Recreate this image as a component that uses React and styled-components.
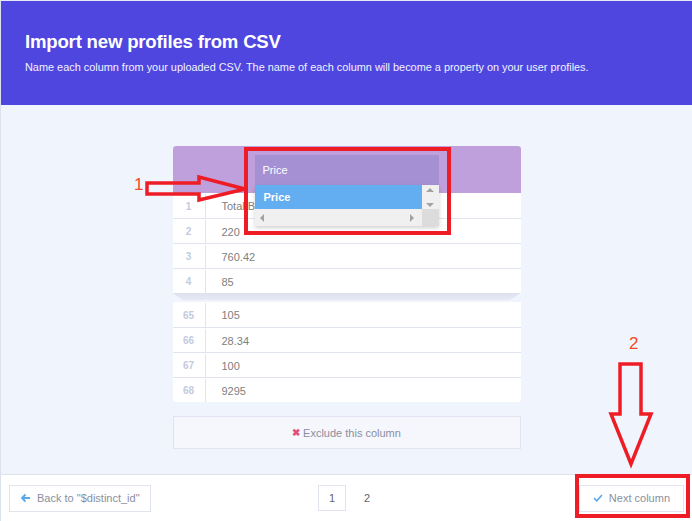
import React from "react";
import styled, { createGlobalStyle } from "styled-components";

const GlobalStyle = createGlobalStyle`
  html, body {
    margin: 0;
    padding: 0;
    background: #f0f4fc;
  }
  body {
    font-family: "Liberation Sans", Arial, sans-serif;
  }
`;

const Page = styled.div`
  position: relative;
  width: 692px;
  height: 521px;
  display: flex;
  flex-direction: column;
  background: #f0f4fc;
  border-left: 1px solid #dbe2ee;
  box-sizing: border-box;
  overflow: hidden;
`;

const Header = styled.header`
  background: #4f46e0;
  height: 105px;
  box-sizing: border-box;
  padding: 30px 24px 0;
  border-top: 1px solid #e6e8f6;
  color: #fff;
`;

const Title = styled.h1`
  margin: 0;
  font-size: 18.6px;
  font-weight: bold;
  letter-spacing: -0.2px;
`;

const Subtitle = styled.p`
  margin: 8px 0 0;
  font-size: 10.9px;
  color: #f2f2ff;
`;

const Main = styled.main`
  flex: 1;
  display: flex;
  flex-direction: column;
  align-items: center;
  padding-top: 41px;
`;

const Column = styled.div`
  width: 348px;
  display: flex;
  flex-direction: column;
`;

const Card = styled.div`
  background: #fff;
  border-radius: ${(p) => p.$radius || "3px"};
  position: relative;
`;

const ColumnHead = styled.div`
  position: relative;
  height: 47px;
  background: #c0a0dc;
  border-radius: 3px 3px 0 0;
  display: flex;
  justify-content: center;
  padding-top: 9px;
  box-sizing: border-box;
`;

const SelectBox = styled.div`
  position: relative;
  width: 184px;
  height: 30px;
  background: #a690d4;
  color: #fff;
  font-size: 11px;
  display: flex;
  align-items: center;
  padding-left: 8px;
  box-sizing: border-box;
`;

const Dropdown = styled.div`
  position: absolute;
  left: 0;
  top: 30px;
  width: 184px;
  height: 41px;
  display: grid;
  grid-template-columns: 1fr 17px;
  grid-template-rows: 24px 17px;
  box-shadow: 0 2px 4px rgba(0, 0, 0, 0.18);
  z-index: 2;
  font-size: 11px;
`;

const Option = styled.div`
  background: #62aef0;
  color: #fff;
  font-weight: bold;
  display: flex;
  align-items: center;
  padding-left: 9px;
`;

const VScroll = styled.div`
  background: #f0f0f0;
  display: flex;
  flex-direction: column;
  align-items: center;
  justify-content: space-between;
  padding: 3px 0 2px;
  box-sizing: border-box;
`;

const HScroll = styled.div`
  background: #f0f0f0;
  display: flex;
  align-items: center;
  justify-content: space-between;
  padding: 0 8px 0 5px;
`;

const Corner = styled.div`
  background: #dcdcdc;
`;

const Tri = styled.span`
  width: 0;
  height: 0;
  border: 4px solid transparent;
  ${(p) =>
    p.$dir === "up"
      ? "border-bottom: 4px solid #a3a3a3; border-top-width: 0;"
      : p.$dir === "down"
      ? "border-top: 4px solid #a3a3a3; border-bottom-width: 0;"
      : p.$dir === "left"
      ? "border-right: 4px solid #a3a3a3; border-left-width: 0;"
      : "border-left: 4px solid #a3a3a3; border-right-width: 0;"}
`;

const Row = styled.div`
  display: grid;
  grid-template-columns: 33px 1fr;
  height: 25px;
  border-top: ${(p) => (p.$first ? "none" : "1px solid #dfe4f0")};
  box-sizing: border-box;
  font-size: 11px;
  padding-top: 1px;
`;

const Num = styled.div`
  border-right: 1px solid #dfe4f0;
  color: #c4cbe0;
  display: flex;
  align-items: center;
  justify-content: center;
  font-weight: bold;
  font-size: 10px;
`;

const Value = styled.div`
  color: #808080;
  display: flex;
  align-items: center;
  padding-left: 16px;
  white-space: nowrap;
  overflow: hidden;
`;

const Fold = styled.div`
  height: 7px;
  margin-bottom: 2px;
  background: linear-gradient(#dde1f0, #e6e9f5);
  clip-path: polygon(0 0, 100% 0, 97% 100%, 3% 100%);
`;

const ExcludeButton = styled.button`
  margin-top: 14px;
  height: 33px;
  background: #f5f7fc;
  border: 1px solid #dfe4f0;
  color: #8a8fa0;
  font-family: inherit;
  font-size: 11px;
  display: flex;
  align-items: center;
  justify-content: center;
  gap: 3px;
  cursor: pointer;
`;

const Cross = styled.span`
  color: #e0507a;
  font-size: 10px;
  font-weight: bold;
`;

const Footer = styled.footer`
  height: 47px;
  background: #fff;
  border-top: 1px solid #dde3ee;
  box-sizing: border-box;
  display: grid;
  grid-template-columns: 1fr auto 1fr;
  align-items: center;
  padding: 0 8px;
`;

const FooterButton = styled.button`
  justify-self: ${(p) => p.$align || "start"};
  height: 27px;
  padding: 0 ${(p) => p.$pad || "10px"};
  background: #fff;
  border: 1px solid #dfe4f0;
  color: #8a8fa0;
  font-family: inherit;
  font-size: 11px;
  display: flex;
  align-items: center;
  gap: 6px;
  cursor: pointer;
`;

const Pager = styled.div`
  display: flex;
  align-items: center;
  gap: 7px;
  margin-left: 6px;
`;

const PageNum = styled.span`
  width: 28px;
  height: 26px;
  box-sizing: border-box;
  border: 1px solid ${(p) => (p.$active ? "#dfe4f0" : "transparent")};
  color: #606470;
  font-size: 11px;
  display: flex;
  align-items: center;
  justify-content: center;
`;

const Overlay = styled.svg`
  position: absolute;
  left: 0;
  top: 0;
  pointer-events: none;
  z-index: 5;
`;

const Mark = styled.span`
  position: absolute;
  left: ${(p) => p.$x}px;
  top: ${(p) => p.$y}px;
  color: #f04a2a;
  font-size: 17px;
  z-index: 6;
`;

const firstRows = [
  ["1", "Total Bill"],
  ["2", "220"],
  ["3", "760.42"],
  ["4", "85"],
];

const lastRows = [
  ["65", "105"],
  ["66", "28.34"],
  ["67", "100"],
  ["68", "9295"],
];

const Annotations = () => (
  <>
    <Overlay width="692" height="521" viewBox="0 0 692 521">
      <g fill="none" stroke="#ee1c25" strokeWidth="4">
        <rect x="245" y="149" width="203" height="84" />
        <polygon points="146,183 198,183 198,177 244,189 198,200 198,194 146,194" strokeWidth="3.5" strokeLinejoin="miter" />
        <rect x="576" y="476" width="111" height="40" />
        <polygon points="619,364 640,364 640,414 650,414 630,464 610,414 619,414" strokeWidth="3.5" />
      </g>
    </Overlay>
    <Mark $x={133} $y={175}>1</Mark>
    <Mark $x={628} $y={334}>2</Mark>
  </>
);

export default function App() {
  return (
    <>
      <GlobalStyle />
      <Page>
        <Header>
          <Title>Import new profiles from CSV</Title>
          <Subtitle>
            Name each column from your uploaded CSV. The name of each column
            will become a property on your user profiles.
          </Subtitle>
        </Header>
        <Main>
          <Column>
            <Card $radius="3px 3px 0 0">
              <ColumnHead>
                <SelectBox>
                  Price
                  <Dropdown>
                    <Option>Price</Option>
                    <VScroll>
                      <Tri $dir="up" />
                      <Tri $dir="down" />
                    </VScroll>
                    <HScroll>
                      <Tri $dir="left" />
                      <Tri $dir="right" />
                    </HScroll>
                    <Corner />
                  </Dropdown>
                </SelectBox>
              </ColumnHead>
              {firstRows.map(([n, v], i) => (
                <Row key={n} $first={i === 0}>
                  <Num>{n}</Num>
                  <Value>{v}</Value>
                </Row>
              ))}
            </Card>
            <Fold />
            <Card $radius="0 0 3px 3px">
              {lastRows.map(([n, v], i) => (
                <Row key={n} $first={i === 0}>
                  <Num>{n}</Num>
                  <Value>{v}</Value>
                </Row>
              ))}
            </Card>
            <ExcludeButton>
              <Cross>✖</Cross>Exclude this column
            </ExcludeButton>
          </Column>
        </Main>
        <Footer>
          <FooterButton>
            <svg width="11" height="10" viewBox="0 0 11 10">
              <path d="M10 5H2M5.5 1.5L2 5l3.5 3.5" fill="none" stroke="#5aa8e8" strokeWidth="1.8" />
            </svg>
            Back to "$distinct_id"
          </FooterButton>
          <Pager>
            <PageNum $active>1</PageNum>
            <PageNum>2</PageNum>
          </Pager>
          <FooterButton $pad="13px" $align="end">
            <svg width="10" height="8" viewBox="0 0 10 8">
              <path d="M1 4.2l2.8 2.6L9 1" fill="none" stroke="#5aa8e8" strokeWidth="1.6" />
            </svg>
            Next column
          </FooterButton>
        </Footer>
        <Annotations />
      </Page>
    </>
  );
}
